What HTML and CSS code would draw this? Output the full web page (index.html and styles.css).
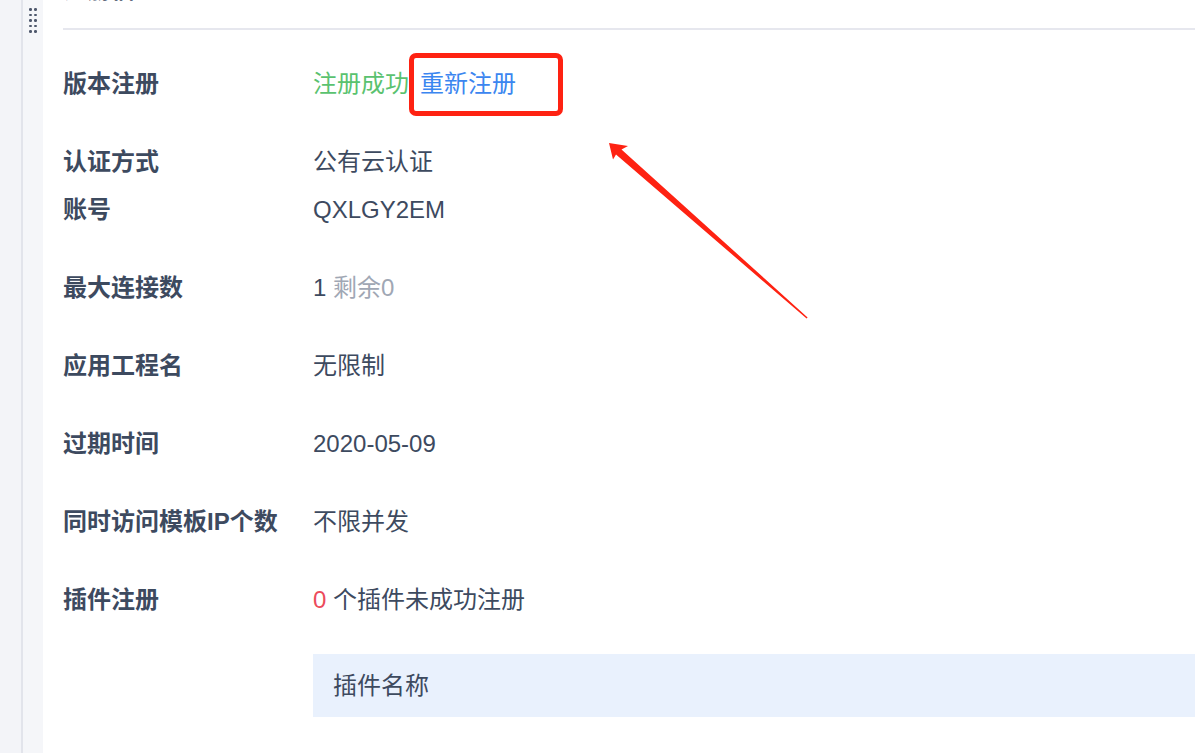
FILE: index.html
```html
<!DOCTYPE html>
<html lang="zh-CN">

<head>
  <meta charset="UTF-8">
  <meta name="viewport" content="width=device-width, initial-scale=1.0">
  <title>注册信息</title>
  <link rel="stylesheet" href="styles.css">
</head>

<body>
  <aside class="rail"></aside>

  <div class="gutter">
    <span class="handle">
      <i></i><i></i><i></i><i></i><i></i><i></i><i></i><i></i><i></i><i></i>
    </span>
  </div>

  <main class="panel">
    <h2 class="panel-title">注册信息</h2>

    <div class="info-list">
      <div class="row">
        <span class="label">版本注册</span>
        <span class="value">
          <span class="ok">注册成功</span><a href="#" class="relink">重新注册</a>
        </span>
      </div>

      <div class="row">
        <span class="label">认证方式</span>
        <span class="value">公有云认证</span>
        <span class="label">账号</span>
        <span class="value">QXLGY2EM</span>
      </div>

      <div class="row">
        <span class="label">最大连接数</span>
        <span class="value">1 <span class="muted">剩余0</span></span>
      </div>

      <div class="row">
        <span class="label">应用工程名</span>
        <span class="value">无限制</span>
      </div>

      <div class="row">
        <span class="label">过期时间</span>
        <span class="value">2020-05-09</span>
      </div>

      <div class="row">
        <span class="label">同时访问模板IP个数</span>
        <span class="value">不限并发</span>
      </div>

      <div class="row">
        <span class="label">插件注册</span>
        <span class="value"><span class="danger">0</span> 个插件未成功注册</span>
      </div>
    </div>

    <div class="plugin-table">
      <div class="plugin-head">插件名称</div>
    </div>
  </main>

  <!-- annotation arrow pointing at the re-register link -->
  <svg class="annotation" width="1195" height="753" viewBox="0 0 1195 753">
    <polygon points="609,143 628,146 621.5,149.5 807.6,317.4 806.6,318.6 616,154.5 613,159.5" fill="#fe2212" />
  </svg>
</body>

</html>
```

FILE: styles.css
```css
html,
body {
  height: 100%;
}

body {
  margin: 0;
  display: flex;
  overflow: hidden;
  font-family: "Liberation Sans", "Noto Sans CJK SC", sans-serif;
  font-size: 24px;
  color: #3d4a5f;
  background: #fff;
}

.rail {
  flex: none;
  width: 21px;
  background: #f3f4f8;
}

.gutter {
  flex: none;
  width: 20px;
  border-left: 2px solid #e2e4eb;
  background: #f5f6f9;
}

.handle {
  display: grid;
  grid-template-columns: repeat(2, 2.5px);
  column-gap: 2.5px;
  row-gap: 3px;
  margin: 8px 0 0 6px;
}

.handle i {
  width: 2.5px;
  height: 2.5px;
  border-radius: 50%;
  background: #4e586c;
}

.panel {
  flex: 1;
  min-width: 0;
  padding-left: 20px;
}

.panel-title {
  margin: -23px 0 0;
  padding-bottom: 25px;
  font-size: 24px;
  line-height: 26px;
  font-weight: 700;
  color: #3d4a5f;
  border-bottom: 2px solid #e6e7ee;
}

.info-list {
  display: flex;
  flex-direction: column;
  gap: 30px;
  padding-top: 30px;
}

.row {
  display: grid;
  grid-template-columns: 250px 1fr;
  line-height: 48px;
}

.label {
  font-weight: 700;
  white-space: nowrap;
}

.ok {
  color: #5ac26f;
}

.relink {
  position: relative;
  margin-left: 11px;
  color: #3b86f0;
  text-decoration: none;
}

.relink::after {
  content: '';
  position: absolute;
  left: -11px;
  top: -17px;
  width: 144px;
  height: 53px;
  border: 5px solid #fe2212;
  border-radius: 7px;
}

.muted {
  color: #a0a7b4;
}

.danger {
  color: #ec4b5b;
}

.plugin-table {
  margin: 30px 0 0 250px;
}

.plugin-head {
  height: 63px;
  padding-left: 20px;
  line-height: 63px;
  background: #e9f1fd;
}

.annotation {
  position: absolute;
  left: 0;
  top: 0;
  pointer-events: none;
}
```
